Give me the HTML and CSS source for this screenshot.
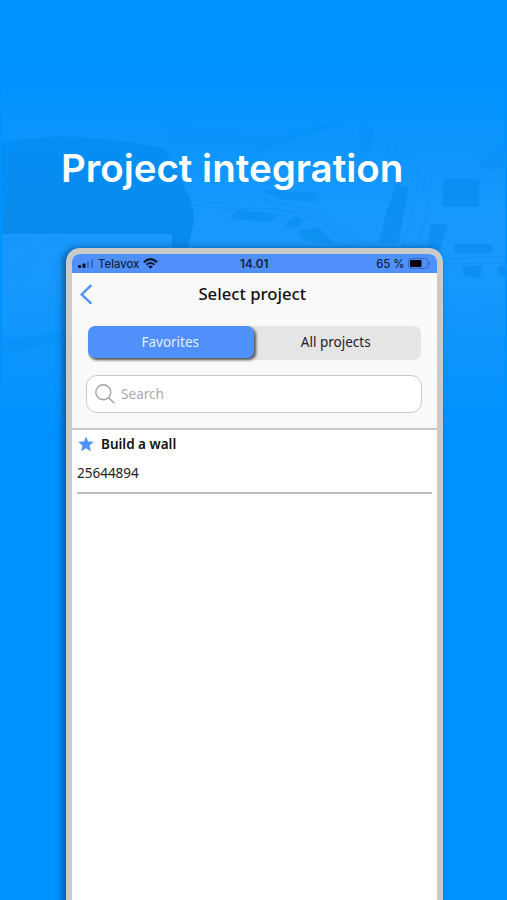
FILE: index.html
```html
<!DOCTYPE html>
<html lang="en">
<head>
<meta charset="utf-8">
<title>Project integration</title>
<link rel="stylesheet" href="styles.css">
</head>
<body>
<main class="promo">
  <svg class="map" viewBox="0 0 507 450" aria-hidden="true">
    <defs>
      <linearGradient id="fade" x1="0" y1="0" x2="0" y2="1">
        <stop offset=".14" stop-color="#fff" stop-opacity="0"/>
        <stop offset=".48" stop-color="#fff" stop-opacity=".85"/>
        <stop offset=".6" stop-color="#fff" stop-opacity=".85"/>
        <stop offset=".98" stop-color="#fff" stop-opacity="0"/>
      </linearGradient>
      <mask id="m"><rect width="507" height="450" fill="url(#fade)"/></mask>
    </defs>
    <g mask="url(#m)">
      <rect x="2" width="503" height="450" fill="#1c99fb"/>
      <path d="M2 142Q60 132 130 142L164 148L178 174Q196 206 194 222L188 247H172V234H2Z" fill="#0b8aea"/>
      <g fill="#108eee">
        <path d="M253 147L340 119L353 113L338 124L253 154Z" opacity=".7"/>
        <path d="M358 126L376 128L368 154L361 152Z" opacity=".6"/>
        <path d="M396 184L409 187L398 243H379L386 214Z"/>
        <path d="M443 179H479V207H443Z"/>
        <path d="M431 224L448 224L440 250H427Z"/>
        <path d="M454 244H492V253H454Z M463 266L483 266L480 278L463 275Z M499 266H505V276L498 275Z"/>
        <path d="M262 190L320 193L315 202L278 199Z M237 210L279 214L272 222L230 219Z M284 224L295 216L303 219L301 226L289 228Z M298 230L319 228L334 243H315L300 237Z" opacity=".8"/>
        <path d="M162 122L220 131L286 137L240 148L172 149Z" opacity=".25"/>
        <path d="M0 342L64 332V343L0 352Z" opacity=".5"/>
        <path d="M477 165L507 140V166L494 171Z" opacity=".5"/>
      </g>
      <g fill="none" stroke="#0e88e2" stroke-width=".8" opacity=".6">
        <path d="M185 194Q204 207 231 201T286 205Q323 211 344 229T364 242"/>
        <path d="M188 205Q220 210 257 208Q304 210 326 226L352 247"/>
        <path d="M387 130Q382 150 397 160Q421 169 419 180L411 217L402 249"/>
        <path d="M395 126Q389 151 406 158Q426 169 438 167L472 161L507 125"/>
        <path d="M417 249L427 211Q431 180 431 173Q447 164 473 172T507 188"/>
        <path d="M3 281L24 257Q31 248 30 240H3M3 295Q14 292 20 280L36 256L45 240H66"/>
        <path d="M442 258L507 257M442 264L507 263M448 322L505 304M448 330L507 310M448 330L507 359"/>
      </g>
    </g>
  </svg>
  <h1 class="headline">Project integration</h1>
  <section class="phone">
    <div class="status">
      <div class="carrier">
        <svg width="17" height="10" viewBox="0 0 17 10"><g fill="#0b1530"><rect y="6" width="3" height="3" rx=".7"/><rect x="4.5" y="4.5" width="3" height="4.5" rx=".7"/></g><g fill="#326bc4"><rect x="9" y="2.5" width="2" height="6.5" rx=".7"/><rect x="13" y=".5" width="2" height="8.5" rx=".7"/></g></svg>
        <span class="name">Telavox</span>
        <svg width="15" height="11" viewBox="0 0 15 11"><g fill="none" stroke="#0b1530" stroke-width="2.1"><path d="M.9 4.2Q7.5-1.8 14.1 4.2"/><path d="M3.5 6.8Q7.5 3.2 11.5 6.8"/></g><path d="M5.2 8.4Q7.5 6.7 9.8 8.4L7.5 10.7Z" fill="#0b1530"/></svg>
      </div>
      <span class="time">14.01</span>
      <div class="power"><span>65 %</span>
        <svg width="23" height="11" viewBox="0 0 23 11"><rect x=".5" y=".5" width="19.5" height="10" rx="2.7" fill="none" stroke="#3568bd"/><rect x="2" y="2" width="11.5" height="7" rx="1" fill="#000"/><path d="M21.2 3.8Q23.5 5.5 21.2 7.2Z" fill="#3568bd"/></svg>
      </div>
    </div>
    <header class="top">
      <div class="nav">
        <svg class="back" width="13" height="21" viewBox="0 0 13 21"><path d="M11.3 1.2L1.7 10.5L11.3 19.6" fill="none" stroke="#5090fa" stroke-width="2.4"/></svg>
        <h2>Select project</h2>
      </div>
      <div class="tabs"><div class="tab active">Favorites</div><div class="tab">All projects</div></div>
      <div class="search">
        <svg width="20" height="20" viewBox="0 0 20 20" fill="none" stroke="#a0a0a0" stroke-width="1.4"><circle cx="8.3" cy="8.3" r="7.5"/><path d="M13.5 13.5L19.3 19.3"/></svg>
        <span>Search</span>
      </div>
    </header>
    <article class="item">
      <div class="item-title">
        <svg width="16" height="16" viewBox="0 0 16 16"><path d="M8 .2L10 5.4L15.8 5.8L11.5 9.5L12.9 15.3L8 12.3L3.1 15.3L4.5 9.5L.2 5.8L6 5.4Z" fill="#5090fa"/></svg>
        <span>Build a wall</span>
      </div>
      <div class="number">25644894</div>
    </article>
  </section>
</main>
</body>
</html>
```
FILE: styles.css
```css
* { box-sizing: border-box; }
body { margin: 0; background: #0092ff; }
.promo {
  position: relative;
  width: 507px;
  height: 900px;
  overflow: hidden;
  font-family: "Noto Sans", sans-serif;
}
.map { position: absolute; top: 0; left: 0; width: 507px; height: 450px; }
.headline {
  position: relative;
  margin: 0;
  padding: 144px 0 0 61px;
  height: 248px;
  font: 600 38.5px/48px Inter, sans-serif;
  letter-spacing: -0.02px;
  white-space: nowrap;
  color: #fff;
}
.phone {
  position: relative;
  width: 376.5px;
  height: 672px;
  margin-left: 66px;
  border: 6px solid #c9cbca;
  border-radius: 14px;
  background: #fff;
  box-shadow: -3px 0 7px rgba(0, 50, 100, .6);
}
.status {
  display: grid;
  grid-template-columns: 1fr auto 1fr;
  align-items: center;
  height: 19px;
  padding: 0 6px;
  border-radius: 8px 8px 0 0;
  background: #5090fa;
  font: 500 11.3px/18px Inter, sans-serif;
  color: #10203f;
}
.carrier, .power { display: flex; align-items: center; }
.carrier .name { margin: 0 4px 0 3px; }
.power { justify-content: flex-end; gap: 3px; }
.time { font-weight: 600; font-size: 11.7px; }
.top {
  height: 157px;
  background: #f9f9f9;
  border-bottom: 2px solid #c9c9c9;
}
.nav {
  display: grid;
  grid-template-columns: 20px 1fr 32px;
  align-items: center;
  height: 42px;
  padding: 0 0 0 8px;
}
.nav h2 {
  margin: 0;
  font: 500 16.7px/24px "Noto Sans", sans-serif;
  text-align: center;
  color: #111;
}
.tabs {
  display: flex;
  width: 333px;
  height: 34px;
  margin: 11px 0 0 16px;
  border-radius: 7px;
  background: #e5e5e5;
}
.tab {
  flex: 1;
  padding-right: 3px;
  font-size: 13.5px;
  line-height: 33px;
  text-align: center;
  color: #222;
}
.active {
  padding-right: 1px;
  height: 32px;
  border-radius: 7px;
  background: #5090fa;
  color: #e4efff;
  box-shadow: 2px 2px 3px rgba(0, 0, 0, .65);
}
.search {
  display: flex;
  align-items: center;
  gap: 6px;
  width: 336px;
  height: 38px;
  margin: 15px 0 0 14px;
  padding: 0 0 1px 8px;
  border: 1.5px solid #c9c9c9;
  border-radius: 11px;
  background: #fff;
  font-size: 13.6px;
  color: #a9a9a9;
}
.item {
  width: 355px;
  height: 64px;
  margin-left: 5px;
  padding-top: 3px;
  border-bottom: 2px solid #bcbcbc;
  color: #222;
}
.item-title {
  display: flex;
  align-items: center;
  gap: 7px;
  height: 22px;
  padding-left: 1px;
  font-size: 13.5px;
  font-weight: 600;
  color: #111;
}
.number { margin-top: 8px; font-size: 13.5px; line-height: 20px; }
```
